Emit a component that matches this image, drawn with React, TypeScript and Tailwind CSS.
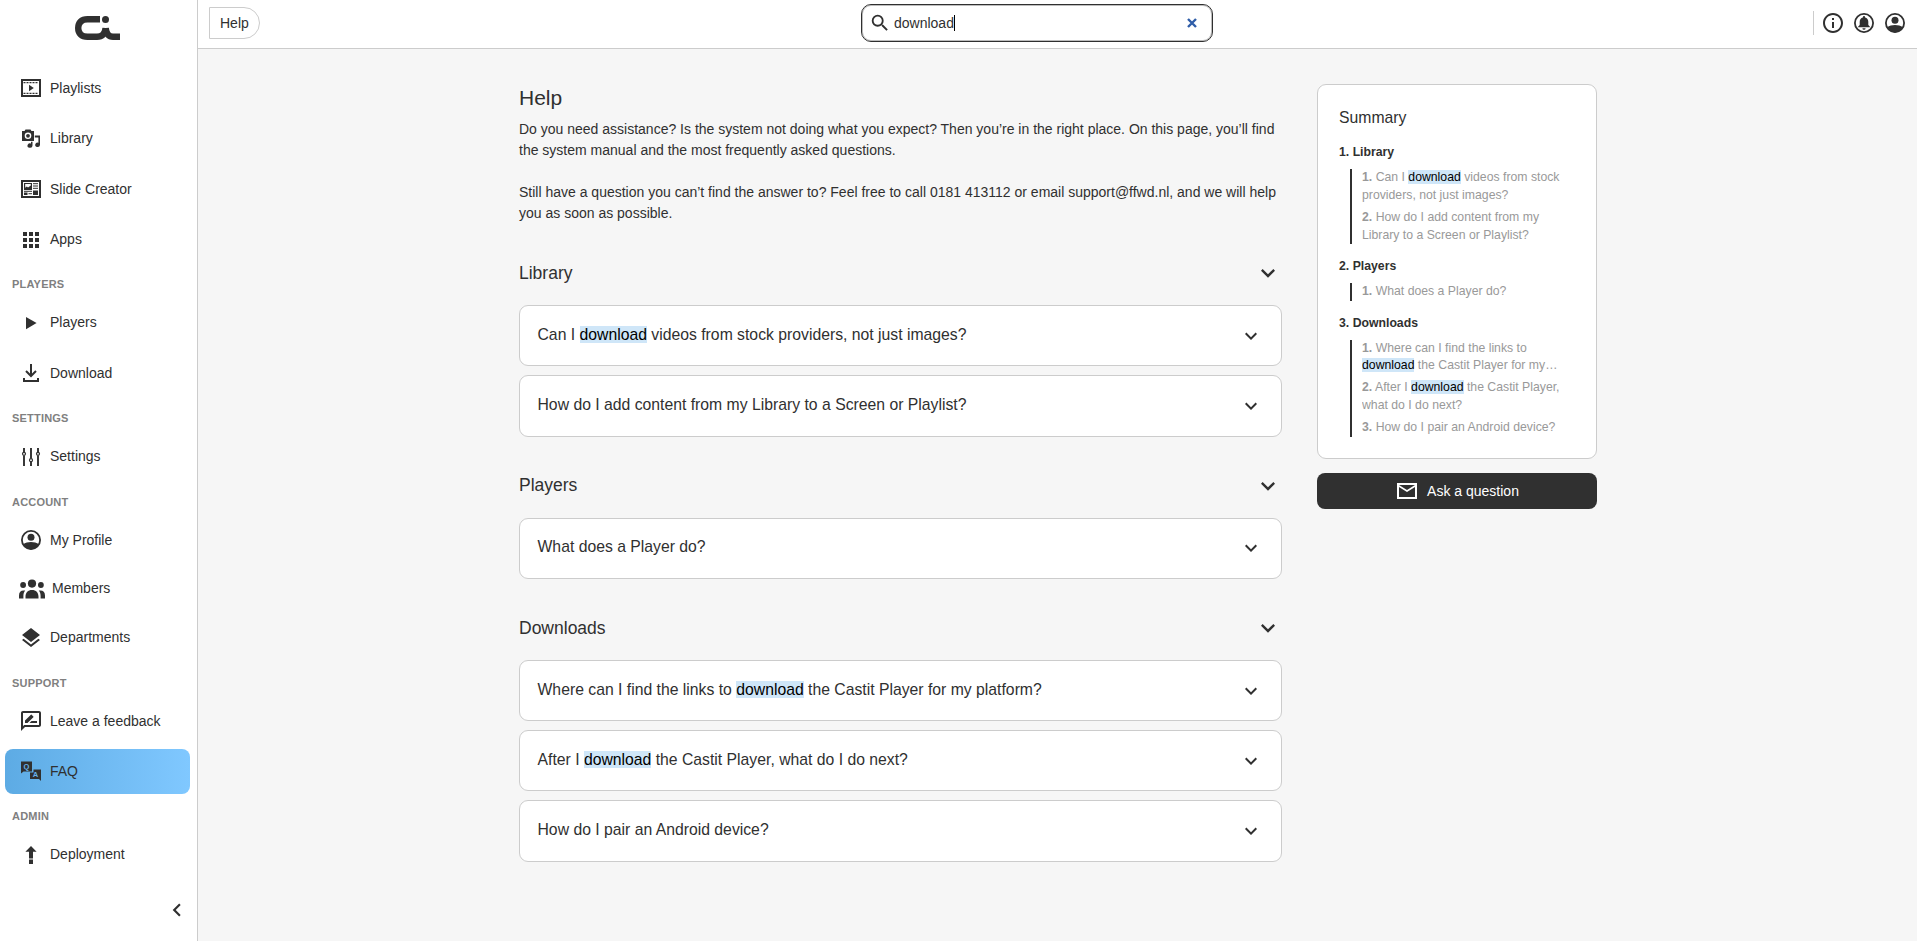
import type { ReactNode } from "react";
import { MdApps, MdLayers, MdOutlineInfo, MdOutlineRateReview, MdSearch } from "react-icons/md";

const svgProps = { width: 24, height: 24, viewBox: "0 0 24 24", fill: "currentColor" };

function Logo() {
  return (
    <svg width="45" height="24" viewBox="0 0 45 24" fill="none" stroke="currentColor" strokeWidth="6.4">
      <path d="M25 3.2H12.5C6.5 3.2 3.2 6.600 3.200 12s3.300 8.800 9.300 8.800H22c4.800 0 8-2.600 8.700-8.800" />
      <path d="M30.700 12C31.300 18 33.500 20.800 38 20.800H45" />
      <circle cx="30.500" cy="3.500" r="3.500" fill="currentColor" stroke="none" />
    </svg>
  );
}

function PlaylistIcon() {
  return (
    <svg {...svgProps}>
      <path fillRule="evenodd" d="M2 3h20v18H2zM4 5v14h16V5z" />
      <path d="M4.500 6.600h15M4.500 17.400h15" stroke="currentColor" strokeWidth="1.100" strokeDasharray="2 1" />
      <path d="M10 8.800v6.400l4.800-3.200z" />
    </svg>
  );
}

function LibraryIcon() {
  return (
    <svg {...svgProps}>
      <path fillRule="evenodd" d="M3 4h2.500l1-1.500h5L12.500 4H15v10H3zM9 5.500a3.300 3.300 0 1 0 0 6.600 3.300 3.300 0 0 0 0-6.600z" />
      <circle cx="9" cy="8.800" r="1.900" />
      <path d="M15.800 8.500H21V18a2.400 2.200 0 1 1-1.600-2.300v-5.200h-3.600zM12 14.800h1.500v3.700a2.500 2.200 0 1 1-1.500-2z" />
    </svg>
  );
}

function SlideIcon() {
  return (
    <svg {...svgProps}>
      <path fillRule="evenodd" d="M2 3h20v18H2zM4 5v14h16V5z" />
      <path fillRule="evenodd" d="M5 6h8v7H5zM6.200 7v3.800l1.600-1.300 1.200 1 2.800-2V7zM5 15.500h3.500V18H5zM14 13.500h5V18h-5z" />
      <path d="M14 6.700h5M14 9h5M14 11.300h5M5 14.300h8M9.500 16.700h3.500" stroke="currentColor" strokeWidth="1" />
    </svg>
  );
}

function PlayIcon() {
  return (
    <svg {...svgProps}>
      <path d="M7 6v12.200L17.600 12z" />
    </svg>
  );
}

function DownloadIcon() {
  return (
    <svg {...svgProps} fill="none" stroke="currentColor" strokeWidth="2">
      <path d="M12 3v11.500M7 10l5 5 5-5M5 17v3h14v-3" />
    </svg>
  );
}

function SlidersIcon() {
  return (
    <svg {...svgProps} fill="none" stroke="currentColor" strokeWidth="1.900">
      <path d="M5 3v4M5 10.500V21M12 3v10.500M12 17v4M19 3v4M19 10.500V21" />
      <g strokeWidth="1.200">
        <circle cx="5" cy="8.800" r="1.500" />
        <circle cx="12" cy="15.200" r="1.500" />
        <circle cx="19" cy="8.800" r="1.500" />
      </g>
    </svg>
  );
}

function AccountIcon() {
  return (
    <svg {...svgProps}>
      <circle cx="12" cy="12" r="9.100" fill="none" stroke="currentColor" strokeWidth="1.800" />
      <circle cx="12" cy="9.300" r="3.500" />
      <path d="M4.200 16.200c2-1.500 4.800-2.300 7.800-2.300s5.800.800 7.800 2.300A9.200 9.200 0 0 1 12 21.500a9.200 9.200 0 0 1-7.800-5.300z" />
    </svg>
  );
}

function BellIcon() {
  return (
    <svg {...svgProps}>
      <circle cx="12" cy="12" r="9.100" fill="none" stroke="currentColor" strokeWidth="1.800" />
      <path d="M12 5a1.100 1.100 0 0 1 1.100 1.100v.500c2 .500 3.200 2.200 3.200 4.200V14l1.500 1.400v.900H6.200v-.900L7.700 14v-3.200c0-2 1.200-3.700 3.200-4.200v-.500A1.100 1.100 0 0 1 12 5zM10.400 17.300h3.200a1.600 1.500 0 0 1-3.200 0z" />
    </svg>
  );
}

function MembersIcon() {
  return (
    <svg width="26" height="20" viewBox="0 0 26 20" fill="currentColor">
      <circle cx="13" cy="4.600" r="4.100" />
      <circle cx="4.100" cy="6" r="2.900" />
      <circle cx="21.900" cy="6" r="2.900" />
      <path d="M6.500 19.500v-1.800C6.500 13.500 9 11 13 11s6.500 2.500 6.500 6.700v1.800zM0 19.500v-3C0 13.500 1.800 11.600 4.500 11.600h1.700c-1.300 1.600-1.800 3.300-1.800 5.700v2.200zM26 19.500v-3c0-3-1.800-4.900-4.500-4.900h-1.700c1.300 1.600 1.800 3.300 1.800 5.700v2.200z" />
    </svg>
  );
}

function FaqIcon() {
  return (
    <svg {...svgProps} fontFamily="Liberation Sans, sans-serif" fontWeight="700">
      <path d="M2 2.500h11v10H4.500L2 14.500zM14.500 10.500H22v11.500l-2-2h-9v-6.500h3.500z" />
      <text x="4.600" y="10.200" fontSize="7.500" fill="#68b2ea">Q</text>
      <text x="13.800" y="18.300" fontSize="7.500" fill="#68b2ea">A</text>
    </svg>
  );
}

function DeployIcon() {
  return (
    <svg {...svgProps}>
      <path d="M12 3l5.600 5.700H14v6.800h-4V8.700H6.400zM10 16.500h4V21h-4z" />
    </svg>
  );
}

function MailIcon() {
  return (
    <svg {...svgProps}>
      <path d="M22 4H2v16h20V4zm-2 14H4V8l8 5 8-5v10zm-8-7L4 6h16l-8 5z" />
    </svg>
  );
}

function ChevronDown({ className }: { className: string }) {
  return (
    <svg className={className} viewBox="0 0 24 24" fill="currentColor">
      <path d="M7.410 8.590 12 13.170l4.590-4.580L18 10l-6 6-6-6z" />
    </svg>
  );
}

/** Highlights every occurrence of the search term. */
function Highlight({ text }: { text: string }) {
  return (
    <>
      {text.split("download").map((part, i) => (
        <span key={i}>
          {i > 0 && <mark className="bg-[#cfe6f8] text-black">download</mark>}
          {part}
        </span>
      ))}
    </>
  );
}

function NavItem({ icon, label, active, className = "h-[50.400px]" }: { icon: ReactNode; label: string; active?: boolean; className?: string }) {
  return (
    <div className={`flex items-center ${className}`}>
      <a className={`flex h-[45px] w-[185px] items-center rounded-[8px] pl-[14px] ${active ? "bg-linear-to-r from-[#5dabe4] to-[#80c8ff]" : ""}`}>
        <span className="flex min-w-6 shrink-0 justify-center">{icon}</span>
        <span className="ml-[7px]">{label}</span>
      </a>
    </div>
  );
}

const NavLabel = ({ children }: { children: ReactNode }) => (
  <div className="h-[33px] pt-[11.700px] pl-[7px] text-[11px] leading-4 font-bold tracking-[0.200px] text-[#808080]">{children}</div>
);

const sections = [
  {
    title: "Library",
    items: ["Can I download videos from stock providers, not just images?", "How do I add content from my Library to a Screen or Playlist?"],
  },
  { title: "Players", items: ["What does a Player do?"] },
  {
    title: "Downloads",
    items: [
      "Where can I find the links to download the Castit Player for my platform?",
      "After I download the Castit Player, what do I do next?",
      "How do I pair an Android device?",
    ],
  },
];

export default function App() {
  return (
    <div className="flex h-[941px] w-full overflow-hidden bg-[#f6f6f6] font-['Liberation_Sans',Arial,sans-serif] text-[14px] text-[#303030]">
      <aside className="flex w-[198px] shrink-0 flex-col border-r border-[#cccccc] bg-white pl-[5px]">
        <div className="flex h-[63.200px] shrink-0 pt-4 pl-[70px]">
          <Logo />
        </div>
        <nav>
          <NavItem icon={<PlaylistIcon />} label="Playlists" />
          <NavItem icon={<LibraryIcon />} label="Library" />
          <NavItem icon={<SlideIcon />} label="Slide Creator" />
          <NavItem icon={<MdApps size={24} />} label="Apps" />
          <NavLabel>PLAYERS</NavLabel>
          <NavItem icon={<PlayIcon />} label="Players" />
          <NavItem icon={<DownloadIcon />} label="Download" />
          <NavLabel>SETTINGS</NavLabel>
          <NavItem icon={<SlidersIcon />} label="Settings" />
          <NavLabel>ACCOUNT</NavLabel>
          <NavItem icon={<AccountIcon />} label="My Profile" />
          <NavItem icon={<MembersIcon />} label="Members" className="h-[47.200px]" />
          <NavItem icon={<MdLayers size={24} />} label="Departments" />
          <NavLabel>SUPPORT</NavLabel>
          <NavItem icon={<MdOutlineRateReview size={24} />} label="Leave a feedback" />
          <NavItem icon={<FaqIcon />} label="FAQ" active />
          <NavLabel>ADMIN</NavLabel>
          <NavItem icon={<DeployIcon />} label="Deployment" />
        </nav>
        <div className="mt-[17px] flex justify-end pr-[7px]">
          <ChevronDown className="size-[26px] rotate-90" />
        </div>
      </aside>

      <div className="flex min-w-0 flex-1 flex-col">
        <header className="grid h-[49px] shrink-0 grid-cols-[663px_352px_1fr] border-b border-[#cccccc] bg-white">
          <div className="pt-[7px] pl-[11px]">
            <div className="flex h-8 w-[51px] items-center rounded-r-full border border-[#cccccc] pl-[10px]">Help</div>
          </div>
          <div className="mt-1 flex h-[38px] items-center rounded-[10px] border border-[#303030] pl-[7px] shadow-[inset_0_0_0_1px_#bdbdbd]">
            <MdSearch size={22} className="shrink-0" />
            <div className="ml-[3px] flex flex-1 items-center">
              <span>download</span>
              <span className="h-4 w-px bg-black" />
            </div>
            <svg className="mr-[15px]" width="10" height="10" viewBox="0 0 10 10" stroke="#2f5da8" strokeWidth="2.400">
              <path d="M1 1l8 8M9 1L1 9" />
            </svg>
          </div>
          <div className="flex items-center justify-end pr-[10px]">
            <div className="mb-[2px] flex items-center gap-[7px]">
              <span className="h-6 w-px bg-[#cccccc]" />
              <MdOutlineInfo size={24} />
              <BellIcon />
              <AccountIcon />
            </div>
          </div>
        </header>

        <main className="flex gap-[35px] pl-[321px]">
          <div className="w-[763px] pt-[34px]">
            <h1 className="text-[21px] leading-[30px]">Help</h1>
            <p className="mt-[6px] leading-[21px]">
              Do you need assistance? Is the system not doing what you expect? Then you’re in the right place. On this page, you’ll find
              the system manual and the most frequently asked questions.
            </p>
            <p className="mt-[21px] leading-[21px]">
              Still have a question you can’t find the answer to? Feel free to call 0181 413112 or email support@ffwd.nl, and we will help
              you as soon as possible.
            </p>
            <div className="mt-[28px] flex flex-col gap-[28px]">
              {sections.map((s) => (
                <section key={s.title}>
                  <div className="flex h-[42px] items-center justify-between">
                    <h2 className="text-[17.500px]">{s.title}</h2>
                    <ChevronDown className="size-7" />
                  </div>
                  <div className="mt-[11px] flex flex-col gap-[9px]">
                    {s.items.map((q) => (
                      <div key={q} className="flex h-[61.300px] items-center justify-between rounded-[9px] border border-[#cccccc] bg-white pr-[18px] pl-[17.500px]">
                        <span className="mb-[2px] text-[15.750px]">
                          <Highlight text={q} />
                        </span>
                        <ChevronDown className="size-6" />
                      </div>
                    ))}
                  </div>
                </section>
              ))}
            </div>
          </div>

          <aside className="w-[280px] pt-[35px]">
            <div className="h-[375px] rounded-[9px] border border-[#cccccc] bg-white px-[21px] pt-[21px]">
              <h2 className="h-[24.500px] text-[15.750px] leading-6">Summary</h2>
              {sections.map((s, i) => (
                <div key={s.title} className="mt-[12.700px]">
                  <h3 className="text-[12.250px] leading-[18px] font-bold">
                    {i + 1}. {s.title}
                  </h3>
                  <ol className="mt-[8.200px] ml-[11px] flex flex-col gap-[4.600px] border-l-2 border-[#303030] pl-[10px] text-[12.250px] leading-[17.600px] text-[#999999]">
                    {s.items.map((q, j) => (
                      <li key={q} className="line-clamp-2 w-[201px]">
                        <b>{j + 1}.</b> <Highlight text={q} />
                      </li>
                    ))}
                  </ol>
                </div>
              ))}
            </div>
            <button className="mt-[14px] flex h-9 w-full items-center justify-center gap-2 rounded-[8px] bg-[#303030] text-white">
              <MailIcon />
              Ask a question
            </button>
          </aside>
        </main>
      </div>
    </div>
  );
}
